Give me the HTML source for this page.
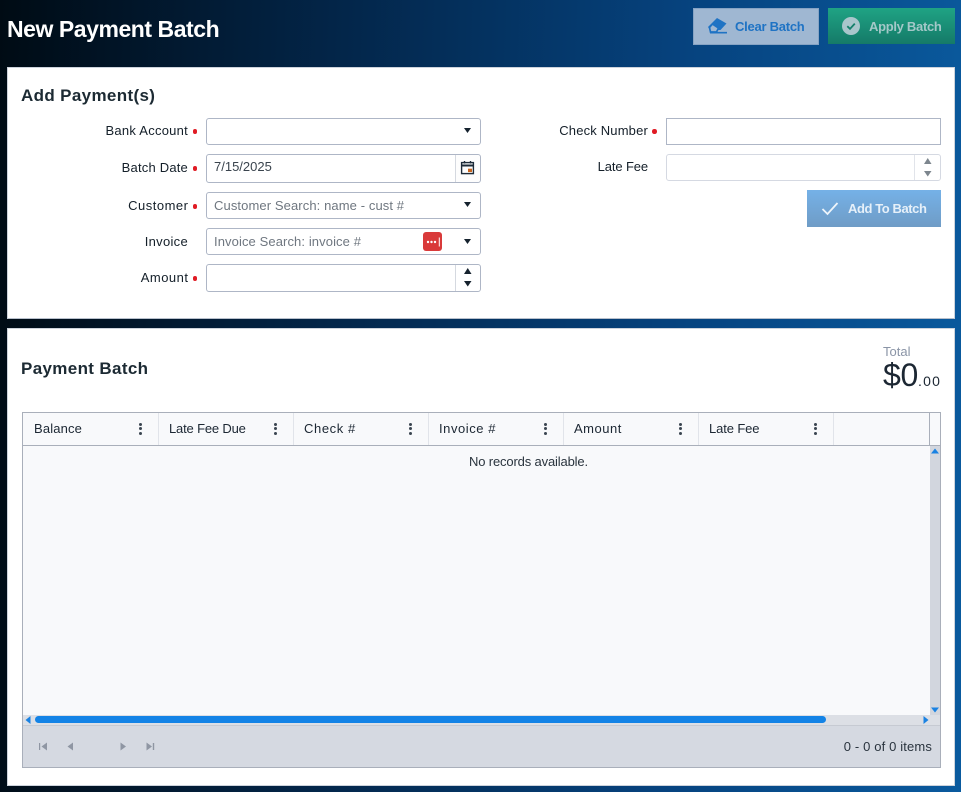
<!DOCTYPE html>
<html><head><meta charset="utf-8">
<style>
html,body{margin:0;padding:0}
body{width:961px;height:792px;overflow:hidden;position:relative;background:linear-gradient(92deg,#000b14 0%,#03264a 35%,#06437f 70%,#0a5a9e 100%);font-family:"Liberation Sans",sans-serif;color:#1c2733}
div,span,svg{position:absolute;box-sizing:border-box}
.t{white-space:nowrap;line-height:16px;font-size:13px}
.lbl{white-space:nowrap;line-height:16px;font-size:13px;text-align:right;right:773px;color:#141f29}
.lbl2{right:313px}
.dot{width:4.5px;height:4.5px;border-radius:50%;background:#e01b24}
.inp{background:#fff;border:1px solid #aeb6c6;border-radius:3px}
.ph{color:#6f7780;font-size:13px;line-height:16px;white-space:nowrap;letter-spacing:.1px}
.hd{white-space:nowrap;font-size:13px;line-height:16px;top:421px;color:#1c2733}
.sep{top:413px;width:1px;height:32px;background:#e1e4ea}
.k{width:3px;height:3px;border-radius:50%;background:#3a4550}
</style></head><body>

<div class="t" style="left:7px;top:15px;font-size:23px;line-height:28px;font-weight:bold;color:#fff;letter-spacing:-.45px">New Payment Batch</div>

<div style="left:693px;top:8px;width:126px;height:37px;background:#9fb7d2;border:1px solid #86a3c4"></div>
<svg style="left:707px;top:17px" width="21" height="18" viewBox="0 0 21 18"><path d="M10 1 L19.5 6.5 L13.5 13 L3 13 L1 10 Z" fill="#1f73c4"/><path d="M2.5 10.5 L5.5 7 L11.5 11 L9.5 15 H3.5 Z" fill="#9fb7d2" stroke="#1f73c4" stroke-width="1.7"/><path d="M3 15.7 H20" stroke="#1f73c4" stroke-width="1.7"/></svg>
<div class="t" style="left:735px;top:19px;color:#1f73c4;font-weight:bold;letter-spacing:-.25px">Clear Batch</div>

<div style="left:828px;top:8px;width:127px;height:36px;background:linear-gradient(180deg,#1fa384,#157a68)"></div>
<svg style="left:842px;top:17px" width="18" height="18" viewBox="0 0 18 18"><circle cx="9" cy="9" r="9" fill="#a9c6cc"/><path d="M5.3 9.2 L8 11.8 L12.8 6.6" fill="none" stroke="#15806c" stroke-width="1.8"/></svg>
<div class="t" style="left:869px;top:19px;color:#a4c8c8;font-weight:bold;letter-spacing:-.3px">Apply Batch</div>

<div style="left:7px;top:67px;width:948px;height:252px;background:#fff;border:1px solid #cdd3dc;border-bottom-color:#b8c0cc"></div>
<div class="t" style="left:21px;top:86px;font-size:17px;line-height:20px;font-weight:bold;letter-spacing:.35px;color:#1c2a33">Add Payment(s)</div>

<div class="lbl" style="top:123px;letter-spacing:.25px">Bank Account</div><div class="dot" style="left:192.5px;top:129px"></div>
<div class="lbl" style="top:160px;letter-spacing:.2px">Batch Date</div><div class="dot" style="left:192.5px;top:166px"></div>
<div class="lbl" style="top:198px;letter-spacing:.5px;right:772.5px">Customer</div><div class="dot" style="left:192.5px;top:204px"></div>
<div class="lbl" style="top:234px;letter-spacing:.3px">Invoice</div>
<div class="lbl" style="top:270px;letter-spacing:.5px;right:772.5px">Amount</div><div class="dot" style="left:192.5px;top:276px"></div>

<div class="inp" style="left:206px;top:118px;width:275px;height:27px"></div>
<svg style="left:464px;top:128px" width="7" height="5"><path d="M0 0H7L3.5 5Z" fill="#15222e"/></svg>

<div class="inp" style="left:206px;top:154px;width:275px;height:29px"></div>
<div class="t" style="left:214px;top:159px;color:#3a444e">7/15/2025</div>
<div style="left:455px;top:155px;width:25px;height:27px;border-left:1px solid #d5d9e0;background:#fdfdfd;border-radius:0 3px 3px 0"></div>
<svg style="left:460px;top:160px" width="15" height="15" viewBox="0 0 15 15"><rect x="1.6" y="2.6" width="11.8" height="11" fill="none" stroke="#1c2a38" stroke-width="1.4"/><path d="M1.5 5.5H13.5" stroke="#1c2a38" stroke-width="2"/><path d="M4.5 1V3.5M10.5 1V3.5" stroke="#1c2a38" stroke-width="1.4"/><rect x="8" y="8.7" width="4" height="3.4" fill="#c8641c"/></svg>

<div class="inp" style="left:206px;top:192px;width:275px;height:27px"></div>
<div class="ph" style="left:214px;top:198px">Customer Search: name - cust #</div>
<svg style="left:464px;top:202px" width="7" height="5"><path d="M0 0H7L3.5 5Z" fill="#15222e"/></svg>

<div class="inp" style="left:206px;top:228px;width:275px;height:27px"></div>
<div class="ph" style="left:214px;top:234px">Invoice Search: invoice #</div>
<div style="left:423px;top:232px;width:19px;height:19px;background:#d93a3a;border-radius:3px"></div>
<svg style="left:423px;top:232px" width="19" height="19"><circle cx="5" cy="10" r="1.2" fill="#fff"/><circle cx="8.5" cy="10" r="1.2" fill="#fff"/><circle cx="12" cy="10" r="1.2" fill="#fff"/><path d="M16.3 5.5V14.5" stroke="#fff" stroke-width="1"/></svg>
<svg style="left:464px;top:239px" width="7" height="5"><path d="M0 0H7L3.5 5Z" fill="#15222e"/></svg>

<div class="inp" style="left:206px;top:264px;width:275px;height:28px"></div>
<div style="left:455px;top:265px;width:1px;height:26px;background:#d5d9e0"></div>
<svg style="left:464px;top:268px" width="8" height="19"><path d="M0 6H7.5L3.75 0Z" fill="#15222e"/><path d="M0 13H7.5L3.75 18.5Z" fill="#15222e"/></svg>

<div class="lbl lbl2" style="top:123px;letter-spacing:.17px">Check Number</div><div class="dot" style="left:652px;top:129px"></div>
<div class="lbl lbl2" style="top:159px;letter-spacing:-.12px">Late Fee</div>

<div style="left:666px;top:118px;width:275px;height:27px;background:#fff;border:1px solid #aeb6c6"></div>
<div style="left:666px;top:154px;width:275px;height:27px;background:#fff;border:1px solid #d5d9e2;border-radius:3px"></div>
<div style="left:914px;top:155px;width:1px;height:25px;background:#e1e4ea"></div>
<svg style="left:924px;top:158px" width="8" height="19"><path d="M0 6H7.5L3.75 0Z" fill="#7d868e"/><path d="M0 13H7.5L3.75 18.5Z" fill="#7d868e"/></svg>

<div style="left:807px;top:190px;width:134px;height:37px;background:linear-gradient(180deg,#75b1e7,#6f9cc6)"></div>
<svg style="left:821px;top:201px" width="18" height="15" viewBox="0 0 18 15"><path d="M1.5 8 L6.5 13 L16.5 2" fill="none" stroke="#eef5fb" stroke-width="1.8"/></svg>
<div class="t" style="left:848px;top:201px;color:#e6f0f9;font-weight:bold;letter-spacing:-.42px">Add To Batch</div>

<div style="left:7px;top:328px;width:948px;height:458px;background:#fff;border:1px solid #cdd3dc"></div>
<div class="t" style="left:21px;top:359px;font-size:17px;line-height:20px;font-weight:bold;letter-spacing:.35px;color:#1c2a33">Payment Batch</div>
<div class="t" style="left:883px;top:344px;color:#8a94a6">Total</div>
<div class="t" style="left:883px;top:358px;font-size:32px;line-height:34px;color:#1c2733;font-weight:normal;letter-spacing:-.3px">$0</div>
<div class="t" style="left:918px;top:373px;font-size:14px;line-height:16px;color:#1c2733;letter-spacing:1.2px">.00</div>

<div style="left:22px;top:412px;width:919px;height:356px;background:#f8f9fb;border:1px solid #a9afba"></div>
<div style="left:23px;top:445px;width:917px;height:1px;background:#a9afba"></div>
<div style="left:929px;top:413px;width:1px;height:32px;background:#a9afba"></div>
<div class="sep" style="left:158px"></div><div class="sep" style="left:293px"></div><div class="sep" style="left:428px"></div><div class="sep" style="left:563px"></div><div class="sep" style="left:698px"></div><div class="sep" style="left:833px"></div>

<div class="hd" style="left:34px;letter-spacing:.15px">Balance</div>
<div class="hd" style="left:169px;letter-spacing:-.17px">Late Fee Due</div>
<div class="hd" style="left:304px;letter-spacing:.6px">Check #</div>
<div class="hd" style="left:439px;letter-spacing:.55px">Invoice #</div>
<div class="hd" style="left:574px;letter-spacing:.5px">Amount</div>
<div class="hd" style="left:709px;letter-spacing:-.12px">Late Fee</div>

<div class="k" style="left:139px;top:423px"></div><div class="k" style="left:139px;top:427px"></div><div class="k" style="left:139px;top:432px"></div>
<div class="k" style="left:274px;top:423px"></div><div class="k" style="left:274px;top:427px"></div><div class="k" style="left:274px;top:432px"></div>
<div class="k" style="left:409px;top:423px"></div><div class="k" style="left:409px;top:427px"></div><div class="k" style="left:409px;top:432px"></div>
<div class="k" style="left:544px;top:423px"></div><div class="k" style="left:544px;top:427px"></div><div class="k" style="left:544px;top:432px"></div>
<div class="k" style="left:679px;top:423px"></div><div class="k" style="left:679px;top:427px"></div><div class="k" style="left:679px;top:432px"></div>
<div class="k" style="left:814px;top:423px"></div><div class="k" style="left:814px;top:427px"></div><div class="k" style="left:814px;top:432px"></div>

<div class="t" style="left:469px;top:454px;color:#2a343e;letter-spacing:-.15px">No records available.</div>

<div style="left:930px;top:446px;width:10px;height:269px;background:#d2d6de"></div>
<svg style="left:931px;top:448px" width="8" height="6"><path d="M0 5.5H8L4 .5Z" fill="#1a82e2"/></svg>
<svg style="left:931px;top:707px" width="8" height="6"><path d="M0 .5H8L4 5.5Z" fill="#1a82e2"/></svg>

<div style="left:23px;top:715px;width:917px;height:10px;background:#dcdfe5"></div>
<svg style="left:25px;top:716px" width="6" height="8"><path d="M5.5 0V8L.5 4Z" fill="#1a82e2"/></svg>
<div style="left:35px;top:716px;width:791px;height:7px;background:#1383e6;border-radius:4px"></div>
<svg style="left:923px;top:716px" width="6" height="8"><path d="M.5 0V8L5.5 4Z" fill="#1a82e2"/></svg>

<div style="left:23px;top:725px;width:917px;height:42px;background:#d5d9e1;border-top:1px solid #c6cad2"></div>
<svg style="left:39px;top:742px" width="9" height="9"><path d="M.5 1V8" stroke="#8f96a3" stroke-width="1.4"/><path d="M8 .5V8.5L2.5 4.5Z" fill="#8f96a3"/></svg>
<svg style="left:67px;top:742px" width="7" height="9"><path d="M6 .5V8.5L.5 4.5Z" fill="#8f96a3"/></svg>
<svg style="left:120px;top:742px" width="7" height="9"><path d="M.5 .5V8.5L6 4.5Z" fill="#8f96a3"/></svg>
<svg style="left:146px;top:742px" width="9" height="9"><path d="M7.5 1V8" stroke="#8f96a3" stroke-width="1.4"/><path d="M.5 .5V8.5L6 4.5Z" fill="#8f96a3"/></svg>
<div class="t" style="right:29px;top:739px;color:#2a343e;letter-spacing:.14px">0 - 0 of 0 items</div>

</body></html>
